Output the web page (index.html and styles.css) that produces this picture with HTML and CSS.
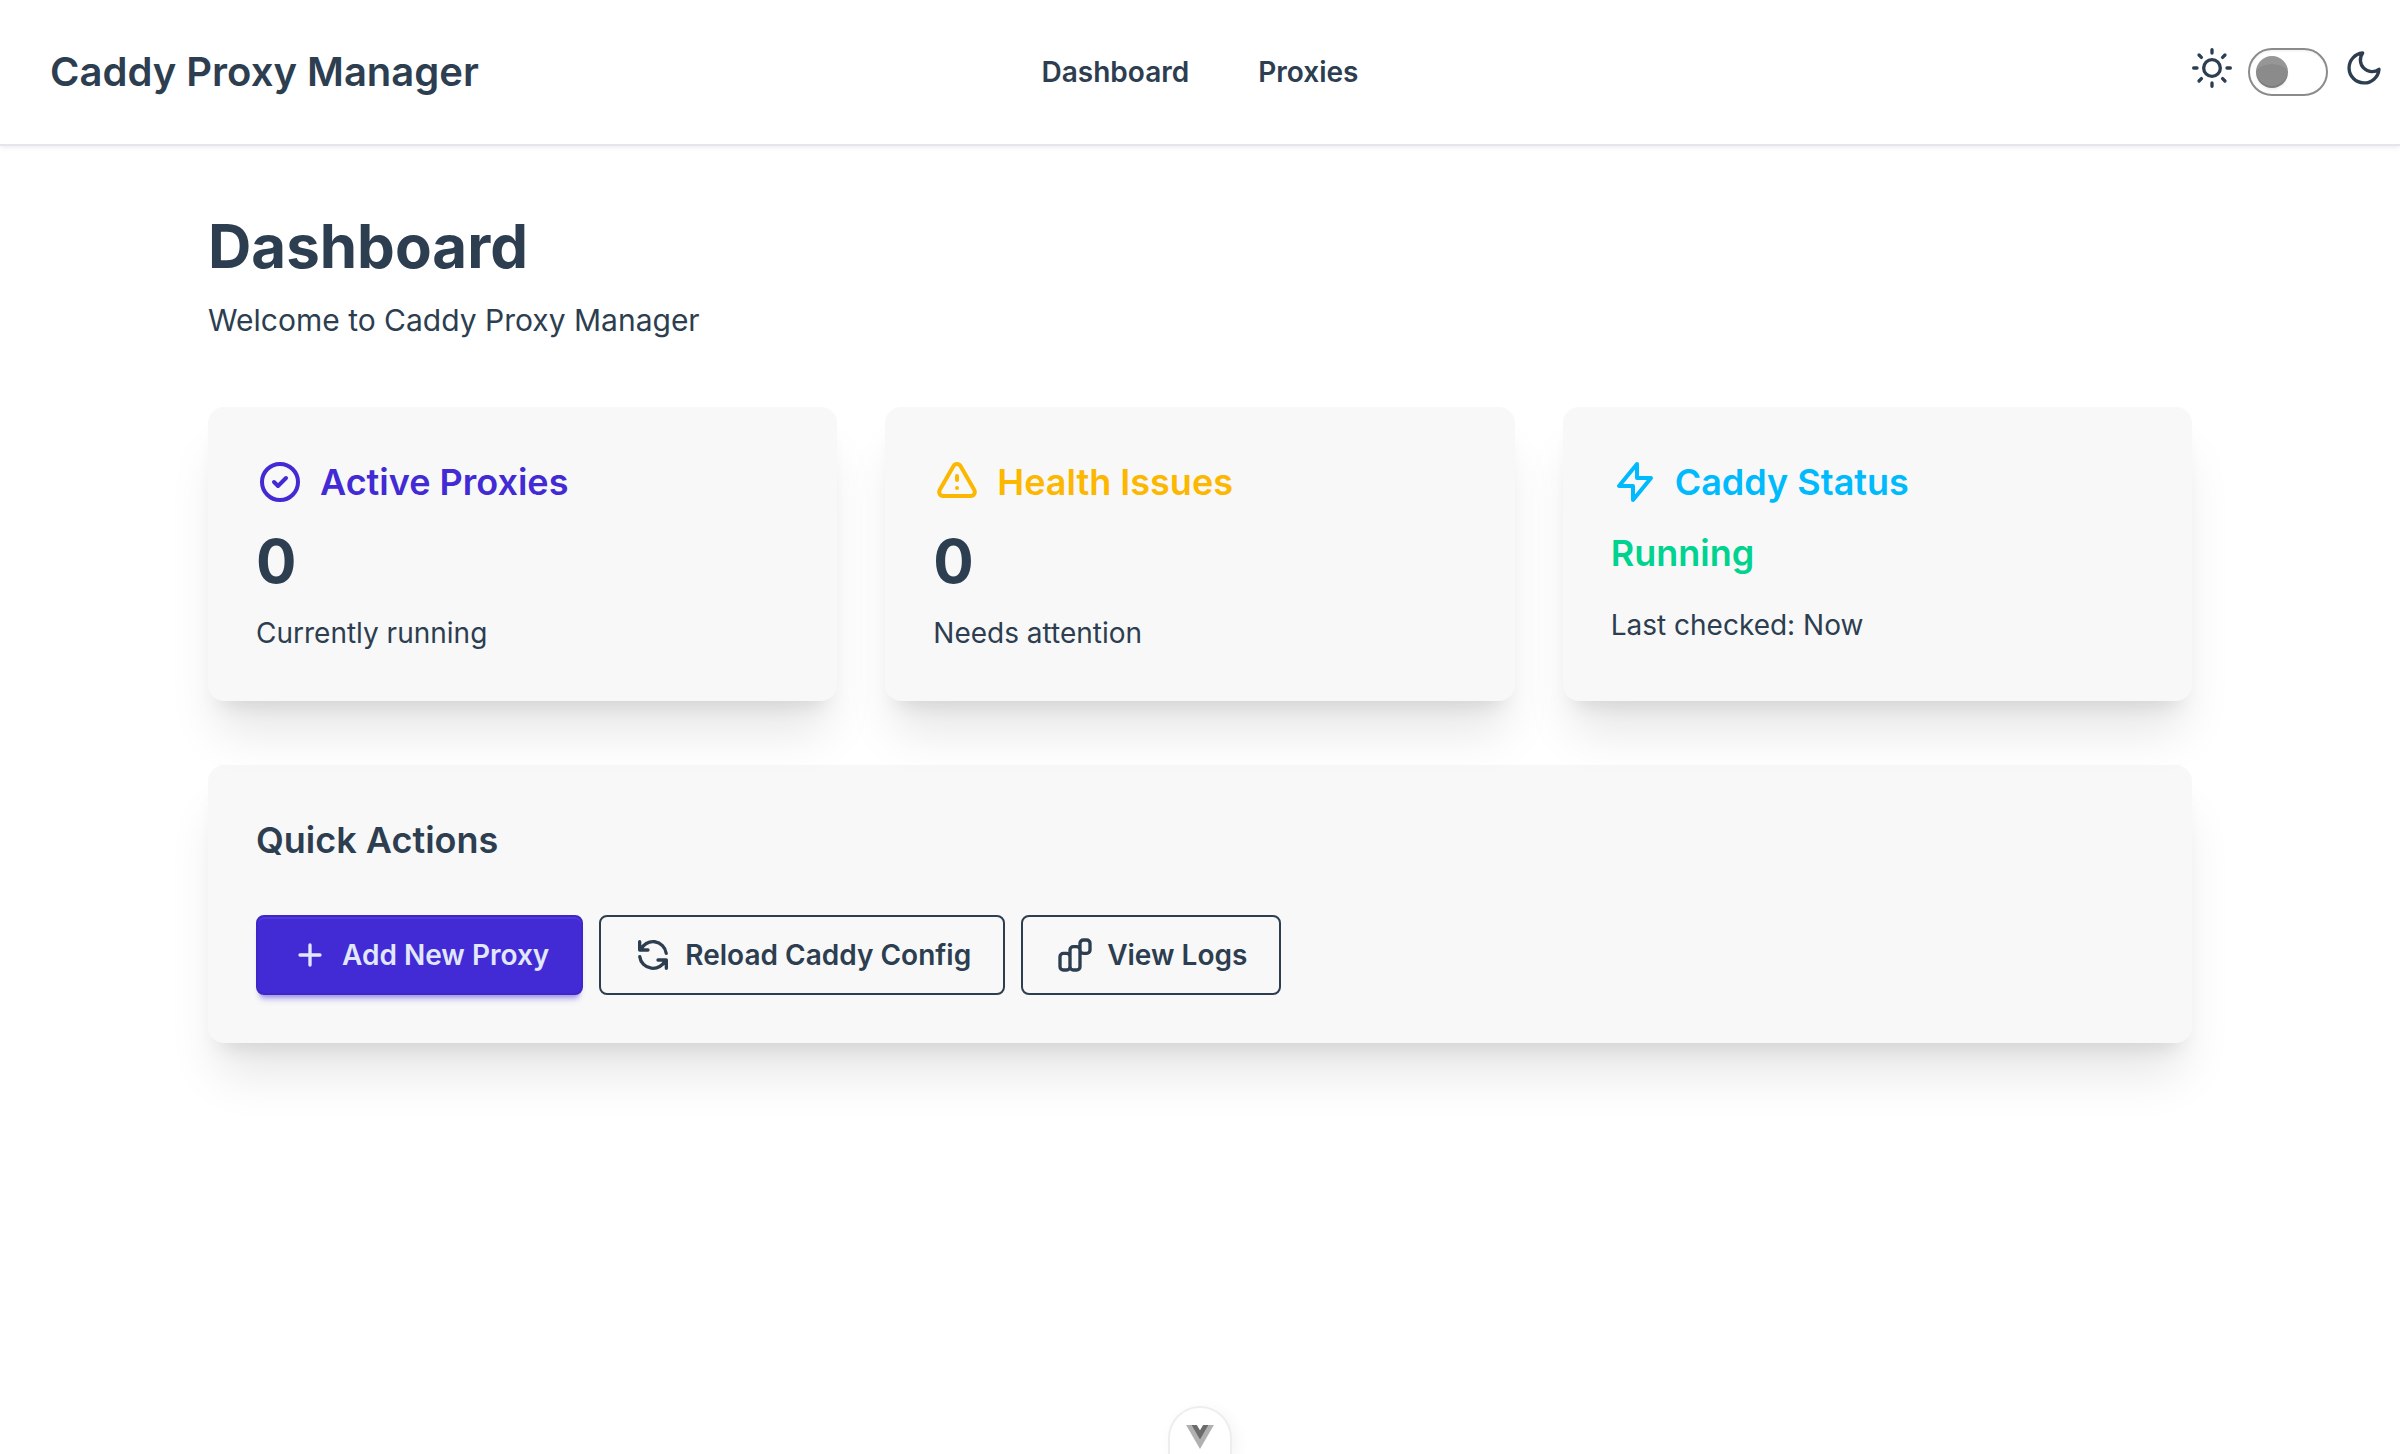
FILE: index.html
```html
<!DOCTYPE html>
<html lang="en">
<head>
<meta charset="utf-8">
<title>Caddy Proxy Manager</title>
<link rel="stylesheet" href="styles.css">
</head>
<body>
<header class="navbar">
  <a class="brand">Caddy Proxy Manager</a>
  <nav class="nav">
    <a class="nav-link">Dashboard</a>
    <a class="nav-link">Proxies</a>
  </nav>
  <div class="theme">
    <svg class="icon icon-sm" viewBox="0 0 24 24"><circle cx="12" cy="12" r="5"/><path d="M12 1v2M12 21v2M4.22 4.22l1.42 1.42M18.36 18.36l1.42 1.42M1 12h2M21 12h2M4.22 19.78l1.42-1.42M18.36 5.64l1.42-1.42"/></svg>
    <span class="toggle"><span class="knob"></span></span>
    <svg class="icon icon-sm" viewBox="0 0 24 24"><path d="M21 12.79A9 9 0 1 1 11.21 3 7 7 0 0 0 21 12.79z"/></svg>
  </div>
</header>

<main class="page">
  <h1 class="page-title">Dashboard</h1>
  <p class="page-subtitle">Welcome to Caddy Proxy Manager</p>

  <section class="stats">
    <article class="card">
      <h2 class="card-title primary">
        <svg class="icon" viewBox="0 0 24 24"><path d="M9 12l2 2 4-4m6 2a9 9 0 11-18 0 9 9 0 0118 0z"/></svg>
        <span>Active Proxies</span>
      </h2>
      <p class="stat-value">0</p>
      <p class="stat-note">Currently running</p>
    </article>
    <article class="card">
      <h2 class="card-title warning">
        <svg class="icon" viewBox="0 0 24 24"><path d="M12 9v2m0 4h.01m-6.938 4h13.856c1.54 0 2.502-1.667 1.732-3L13.732 4c-.77-1.333-2.694-1.333-3.464 0L3.34 16c-.77 1.333.192 3 1.732 3z"/></svg>
        <span>Health Issues</span>
      </h2>
      <p class="stat-value">0</p>
      <p class="stat-note">Needs attention</p>
    </article>
    <article class="card">
      <h2 class="card-title info">
        <svg class="icon" viewBox="0 0 24 24"><path d="M13 10V3L4 14h7v7l9-11h-7z"/></svg>
        <span>Caddy Status</span>
      </h2>
      <p class="status">Running</p>
      <p class="stat-note">Last checked: Now</p>
    </article>
  </section>

  <section class="card actions-card">
    <h2 class="card-title">Quick Actions</h2>
    <div class="actions">
      <button class="btn btn-primary">
        <svg class="icon icon-sm" viewBox="0 0 24 24"><path d="M12 6v6m0 0v6m0-6h6m-6 0H6"/></svg>
        <span>Add New Proxy</span>
      </button>
      <button class="btn">
        <svg class="icon icon-sm" viewBox="0 0 24 24"><path d="M4 4v5h.582m15.356 2A8.001 8.001 0 004.582 9m0 0H9m11 11v-5h-.581m0 0a8.003 8.003 0 01-15.357-2m15.357 2H15"/></svg>
        <span>Reload Caddy Config</span>
      </button>
      <button class="btn">
        <svg class="icon icon-sm" viewBox="0 0 24 24"><path d="M9 19v-6a2 2 0 00-2-2H5a2 2 0 00-2 2v6a2 2 0 002 2h2a2 2 0 002-2zm0 0V9a2 2 0 012-2h2a2 2 0 012 2v10m-6 0a2 2 0 002 2h2a2 2 0 002-2m0-10V5a2 2 0 012-2h2a2 2 0 012 2v4a2 2 0 01-2 2h-2a2 2 0 01-2-2z"/></svg>
        <span>View Logs</span>
      </button>
    </div>
  </section>
</main>

<div class="devtools">
  <svg class="vue" viewBox="0 0 256 221"><path fill="#b0b0b0" d="M204.8 0H256L128 220.8 0 0h97.92L128 51.2 157.44 0z"/><path fill="#6b6b6b" d="M50.56 0L128 133.12 204.8 0h-47.36L128 51.2 97.92 0z"/></svg>
</div>
</body>
</html>
```
FILE: styles.css
```css
* { box-sizing: border-box; margin: 0; padding: 0; }

body {
  height: 1454px;
  overflow: hidden;
  background: #fff;
  color: #2c3e50;
  font-family: Inter, "Liberation Sans", sans-serif;
  font-size: 28px;
  line-height: 40px;
  font-optical-sizing: none;
  -webkit-font-smoothing: antialiased;
}

.icon {
  width: 48px;
  height: 48px;
  flex: none;
  fill: none;
  stroke: currentColor;
  stroke-width: 2;
  stroke-linecap: round;
  stroke-linejoin: round;
}
.icon-sm { width: 40px; height: 40px; }

/* Top bar */
.navbar {
  display: grid;
  grid-template-columns: 1fr auto 1fr;
  align-items: center;
  height: 146px;
  padding: 0 16px;
  border-bottom: 2px solid #e5e5ec;
  box-shadow: 0 2px 6px rgba(0, 0, 0, .05), 0 2px 4px -2px rgba(0, 0, 0, .05);
}
.brand { padding-left: 34px; font-size: 40px; font-weight: 600; line-height: 56px; }
.nav { display: flex; gap: 69px; font-weight: 600; }
.theme { display: flex; justify-content: flex-end; gap: 16px; height: 48px; }
.toggle {
  width: 80px;
  height: 48px;
  padding: 6px;
  border: 2px solid #8b8b8b;
  border-radius: 24px;
  box-shadow: inset 0 2px rgba(0, 0, 0, .03);
}
.knob {
  display: block;
  width: 32px;
  height: 32px;
  border-radius: 50%;
  background: #8b8b8b;
  box-shadow: 0 2px 2px rgba(0, 0, 0, .06), inset 0 -2px rgba(0, 0, 0, .1), inset 0 16px 0 -8px rgba(255, 255, 255, .1);
}

/* Page */
.page { padding: 64px 208px 0; }
.page-title { font-size: 60px; font-weight: 700; line-height: 72px; }
.page-subtitle { margin: 16px 0 65px; font-size: 30px; line-height: 44px; }

.stats { display: grid; grid-template-columns: repeat(3, 1fr); gap: 48px; margin-bottom: 64px; }
.card {
  display: flex;
  flex-direction: column;
  gap: 16px;
  padding: 48px;
  border-radius: 16px;
  background: #f8f8f8;
  box-shadow: 0 40px 50px -10px rgba(0, 0, 0, .1), 0 16px 20px -12px rgba(0, 0, 0, .1);
}
.card-title { display: flex; align-items: center; gap: 16px; font-size: 36px; font-weight: 600; line-height: 54px; }
.primary { color: #422ad5; }
.warning { color: #fcb700; }
.info { color: #00bafe; }
.stat-value { font-size: 60px; font-weight: 700; line-height: 72px; }
.status { margin-bottom: 8px; color: #00d390; font-size: 36px; font-weight: 600; line-height: 56px; }

.actions-card { gap: 48px; }
.actions { display: flex; gap: 16px; }
.btn {
  display: flex;
  align-items: center;
  gap: 12px;
  height: 80px;
  padding: 0 32px;
  border: 2px solid #2c3e50;
  border-radius: 8px;
  background: transparent;
  color: #2c3e50;
  font: inherit;
  font-weight: 600;
}
.btn-primary {
  border-color: #3e27c9;
  background: #422ad5;
  color: #e0e7ff;
  box-shadow: inset 0 2px rgba(255, 255, 255, .07), 0 6px 4px -4px rgba(66, 42, 213, .3), 0 8px 6px -4px rgba(66, 42, 213, .3);
}

/* Devtools handle, cut off by the bottom edge */
.devtools {
  position: absolute;
  top: 1406px;
  left: 1168px;
  display: flex;
  justify-content: center;
  width: 64px;
  height: 48px;
  padding-top: 17px;
  border: 2px solid #eee;
  border-bottom: 0;
  border-radius: 32px 32px 0 0;
  background: #fff;
  box-shadow: 4px 4px 16px rgba(0, 0, 0, .05);
}
.vue { width: 28px; height: 24px; }
```
